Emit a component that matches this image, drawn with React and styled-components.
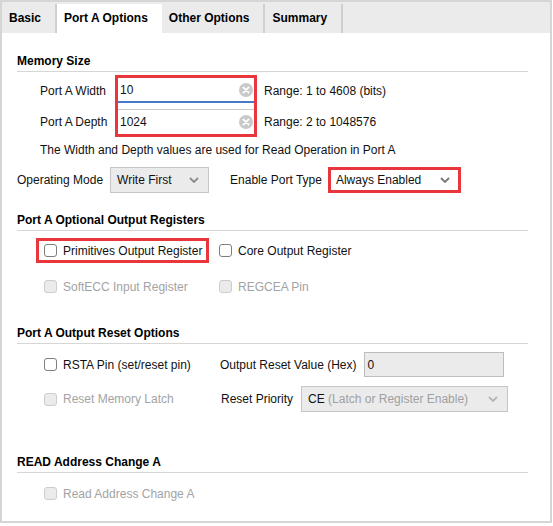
import React from 'react';
import styled, { createGlobalStyle } from 'styled-components';

const GlobalStyle = createGlobalStyle`
  body {
    margin: 0;
    background: #ffffff;
    font-family: "Liberation Sans", Arial, sans-serif;
    font-size: 12px;
    color: #111111;
  }
`;

const Window = styled.div`
  width: 552px;
  height: 523px;
  box-sizing: border-box;
  border: 2px solid #d5d5d5;
  display: flex;
  flex-direction: column;
  background: #ffffff;
`;

const TabBar = styled.div`
  height: 31px;
  background: #ebebeb;
  display: flex;
  align-items: flex-end;
`;

const Tab = styled.div`
  height: 29px;
  box-sizing: border-box;
  display: flex;
  align-items: center;
  padding: 0 14px 2px 7px;
  font-weight: bold;
  color: #000000;
  background: ${(p) => (p.$active ? '#ffffff' : 'transparent')};
  border-right: ${(p) => (p.$active ? 'none' : '2px solid #cfcfcf')};
`;

const Body = styled.div`
  flex: 1;
  padding: 21px 22px 0 15px;
`;

const SectionTitle = styled.div`
  font-weight: bold;
  color: #000000;
  line-height: 14px;
  padding-bottom: 3px;
  border-bottom: 1px solid #d6d6d6;
  margin-top: ${(p) => p.$top || 0}px;
`;

const Text = styled.span`
  line-height: 14px;
  white-space: nowrap;
  color: ${(p) => (p.$muted ? '#a3a3a3' : '#111111')};
`;

const SizeGrid = styled.div`
  display: grid;
  grid-template-columns: 75px 142px auto;
  grid-template-rows: 31px 31px;
  align-items: center;
  margin: 3px 0 0 23px;
`;

const Range = styled(Text)`
  margin-left: 7px;
`;

const Highlight = styled.div`
  grid-column: 2;
  grid-row: 1 / span 2;
  align-self: stretch;
  border: 3px solid #e8363c;
  box-sizing: border-box;
  height: 62px;
  display: flex;
  flex-direction: column;
`;

const Field = styled.div`
  display: flex;
  align-items: center;
  justify-content: space-between;
  padding: 0 1px 0 2px;
  height: ${(p) => (p.$focused ? 23 : 24)}px;
  border-bottom: ${(p) => (p.$focused ? '2px solid #4a78c8' : 'none')};
  border-top: ${(p) => (p.$focused ? 'none' : '1px solid #c8c8c8')};
  margin-top: ${(p) => (p.$focused ? 0 : 6)}px;
`;

const Note = styled.div`
  line-height: 14px;
  margin: 6px 0 0 23px;
`;

const OptionRow = styled.div`
  display: flex;
  align-items: center;
  height: 26px;
  margin-top: 10px;
`;

const Select = styled.div`
  height: 26px;
  box-sizing: border-box;
  width: ${(p) => p.$width}px;
  display: flex;
  align-items: center;
  justify-content: space-between;
  margin-left: ${(p) => p.$gap || 0}px;
  border: ${(p) => (p.$marked ? '3px solid #e8363c' : '1px solid #c6c6c6')};
  background: ${(p) => (p.$marked ? '#ffffff' : '#ebebeb')};
  padding: ${(p) => (p.$marked ? '0 8px 0 5px' : '0 9px 0 6px')};
`;

const SideLabel = styled(Text)`
  margin-left: ${(p) => p.$left || 0}px;
`;

const CheckGrid = styled.div`
  display: grid;
  grid-template-columns: 175px auto;
  grid-auto-rows: 25px;
  row-gap: 11px;
  margin-top: 7px;
  padding-left: 27px;
`;

const CheckItem = styled.div`
  display: flex;
  align-items: center;
  gap: 6px;
  height: 25px;
  box-sizing: border-box;
  width: fit-content;
  ${(p) =>
    p.$marked &&
    `
    border: 3px solid #e8363c;
    padding: 0 4px 0 5px;
    margin-left: -8px;
  `}
`;

const Box = styled.span`
  width: 13px;
  height: 13px;
  box-sizing: border-box;
  border-radius: 3px;
  border: 1px solid ${(p) => (p.$disabled ? '#cdcdcd' : '#7f7f7f')};
  background: ${(p) => (p.$disabled ? '#ebebeb' : '#ffffff')};
  flex-shrink: 0;
`;

const ResetRow = styled.div`
  display: flex;
  align-items: center;
  height: ${(p) => p.$height}px;
  margin-top: ${(p) => p.$top}px;
  padding-left: 27px;
`;

const LeftCell = styled.div`
  width: ${(p) => p.$width}px;
  flex-shrink: 0;
`;

const ValueInput = styled.div`
  width: 140px;
  height: 25px;
  box-sizing: border-box;
  margin-left: 7px;
  border: 1px solid #bdbdbd;
  background: #ebebeb;
  display: flex;
  align-items: center;
  padding-left: 3px;
`;

const Dim = styled.span`
  color: #a0a0a0;
`;

const ClearIcon = () => (
  <svg width="14" height="14" viewBox="0 0 14 14">
    <circle cx="7" cy="7" r="7" fill="#c9c9c9" />
    <path d="M4.4 4.4 L9.6 9.6 M9.6 4.4 L4.4 9.6" stroke="#ffffff" strokeWidth="1.9" strokeLinecap="round" />
  </svg>
);

const Chevron = ({ color = '#8a8a8a' }) => (
  <svg width="10" height="6" viewBox="0 0 10 6">
    <polyline points="1,1 5,5 9,1" fill="none" stroke={color} strokeWidth="1.8" />
  </svg>
);

const Check = ({ label, disabled, marked }) => (
  <CheckItem $marked={marked}>
    <Box $disabled={disabled} />
    <Text $muted={disabled}>{label}</Text>
  </CheckItem>
);

const tabs = ['Basic', 'Port A Options', 'Other Options', 'Summary'];

export default function App() {
  return (
    <>
      <GlobalStyle />
      <Window>
        <TabBar>
          {tabs.map((t) => (
            <Tab key={t} $active={t === 'Port A Options'}>
              {t}
            </Tab>
          ))}
        </TabBar>
        <Body>
          <SectionTitle>Memory Size</SectionTitle>
          <SizeGrid>
            <Text>Port A Width</Text>
            <Highlight>
              <Field $focused>
                <Text>10</Text>
                <ClearIcon />
              </Field>
              <Field>
                <Text>1024</Text>
                <ClearIcon />
              </Field>
            </Highlight>
            <Range>Range: 1 to 4608 (bits)</Range>
            <Text>Port A Depth</Text>
            <Range>Range: 2 to 1048576</Range>
          </SizeGrid>
          <Note>The Width and Depth values are used for Read Operation in Port A</Note>
          <OptionRow>
            <Text>Operating Mode</Text>
            <Select $width={99} $gap={7}>
              <Text>Write First</Text>
              <Chevron />
            </Select>
            <SideLabel $left={21}>Enable Port Type</SideLabel>
            <Select $width={133} $gap={6} $marked>
              <Text>Always Enabled</Text>
              <Chevron color="#777777" />
            </Select>
          </OptionRow>

          <SectionTitle $top={20}>Port A Optional Output Registers</SectionTitle>
          <CheckGrid>
            <Check label="Primitives Output Register" marked />
            <Check label="Core Output Register" />
            <Check label="SoftECC Input Register" disabled />
            <Check label="REGCEA Pin" disabled />
          </CheckGrid>

          <SectionTitle $top={27}>Port A Output Reset Options</SectionTitle>
          <ResetRow $height={25} $top={8}>
            <LeftCell $width={176}>
              <Check label="RSTA Pin (set/reset pin)" />
            </LeftCell>
            <Text>Output Reset Value (Hex)</Text>
            <ValueInput>
              <Text>0</Text>
            </ValueInput>
          </ResetRow>
          <ResetRow $height={26} $top={9}>
            <LeftCell $width={177}>
              <Check label="Reset Memory Latch" disabled />
            </LeftCell>
            <Text>Reset Priority</Text>
            <Select $width={207} $gap={8}>
              <Text>
                CE <Dim>(Latch or Register Enable)</Dim>
              </Text>
              <Chevron color="#b5b5b5" />
            </Select>
          </ResetRow>

          <SectionTitle $top={43}>READ Address Change A</SectionTitle>
          <ResetRow $height={25} $top={8}>
            <Check label="Read Address Change A" disabled />
          </ResetRow>
        </Body>
      </Window>
    </>
  );
}
